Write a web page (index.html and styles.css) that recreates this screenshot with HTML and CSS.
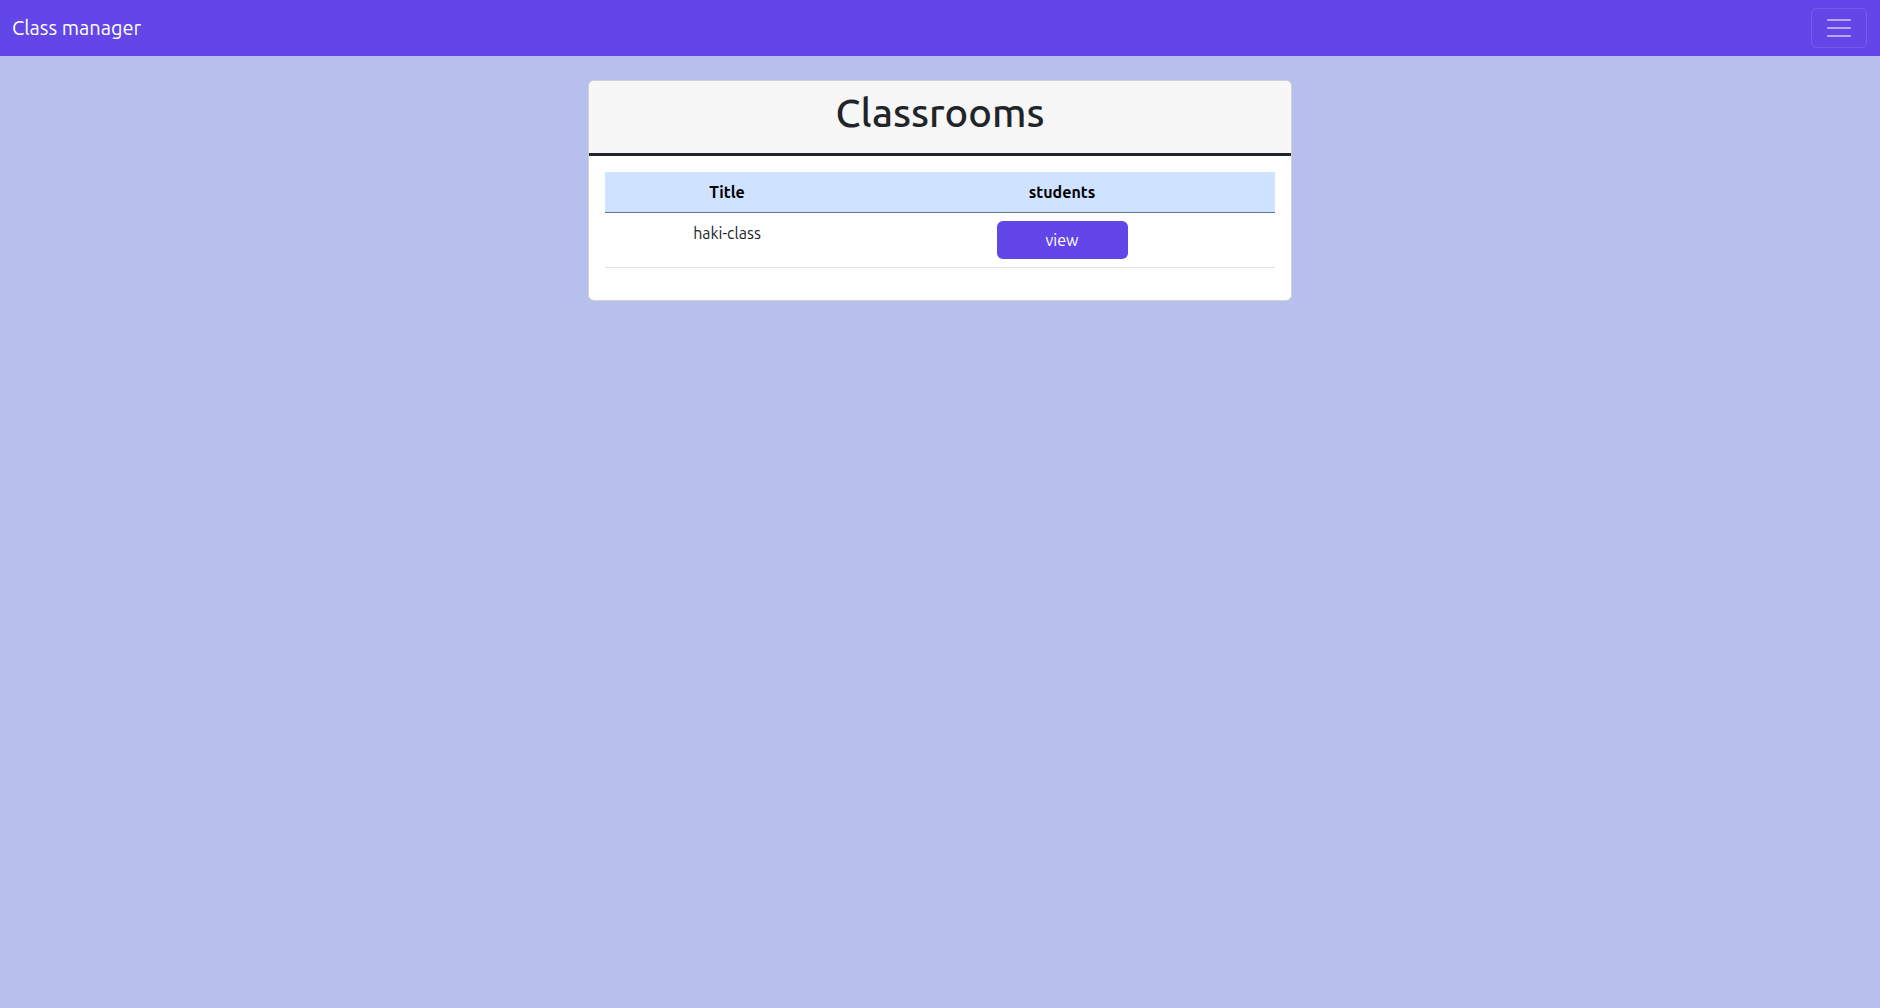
FILE: index.html
```html
<!DOCTYPE html>
<html lang="en">
<head>
<meta charset="utf-8">
<title>Class manager</title>
<link rel="stylesheet" href="styles.css">
</head>
<body>
<nav class="navbar">
  <a class="brand" href="#">Class manager</a>
  <button class="toggler" aria-label="Toggle navigation">
    <svg width="30" height="30" viewBox="0 0 30 30"><path d="M4 7h22M4 15h22M4 23h22" stroke="rgba(255,255,255,0.55)" stroke-width="2" stroke-linecap="round" fill="none"/></svg>
  </button>
</nav>
<main class="main">
  <section class="card">
    <header class="card-header">
      <h1 class="card-title">Classrooms</h1>
    </header>
    <div class="card-body">
      <table class="table">
        <thead>
          <tr>
            <th class="col-title">Title</th>
            <th>students</th>
          </tr>
        </thead>
        <tbody>
          <tr>
            <td>haki-class</td>
            <td><button class="btn">view</button></td>
          </tr>
        </tbody>
      </table>
    </div>
  </section>
</main>
</body>
</html>
```
FILE: styles.css
```css
* { box-sizing: border-box; }
html, body { margin: 0; padding: 0; }
body {
  font-family: "Ubuntu", "Open Sans", "Noto Sans", sans-serif;
  font-size: 16px;
  line-height: 1.5;
  color: #212529;
  background: #b7c0ec;
  min-height: 1008px;
}
.navbar {
  height: 56px;
  background: #6346e8;
  display: flex;
  align-items: center;
  justify-content: space-between;
  padding: 0 13px 0 12px;
}
.brand {
  color: #fff;
  text-decoration: none;
  font-size: 20px;
  line-height: 30px;
}
.toggler {
  width: 56px;
  height: 40px;
  background: transparent;
  border: 1px solid rgba(255,255,255,0.12);
  border-radius: 6px;
  display: flex;
  align-items: center;
  justify-content: center;
  padding: 0;
}
.main {
  display: flex;
  justify-content: center;
  padding-top: 24px;
}
.card {
  width: 704px;
  background: #fff;
  border: 1px solid rgba(0,0,0,0.175);
  border-radius: 6px;
  overflow: hidden;
}
.card-header {
  background: #f7f7f7;
  border-bottom: 3px solid #212529;
  padding: 8px 16px;
  text-align: center;
}
.card-title {
  margin: 0 0 8px;
  font-size: 40px;
  font-weight: 500;
  line-height: 48px;
  color: #212529;
}
.card-body {
  padding: 16px;
}
.table {
  width: 100%;
  border-collapse: collapse;
  margin-bottom: 16px;
  text-align: center;
}
.table th {
  background: #cfe2ff;
  color: #000;
  font-weight: 700;
  padding: 8px;
  border-bottom: 1px solid #687489;
  line-height: 24px;
}
.col-title { width: 244px; }
.table td {
  padding: 8px;
  vertical-align: top;
  border-bottom: 1px solid #dee2e6;
  line-height: 24px;
}
.btn {
  width: 131px;
  height: 38px;
  background: #6346e8;
  color: #fff;
  border: none;
  border-radius: 6px;
  font-family: inherit;
  font-size: 16px;
  cursor: pointer;
}
```
